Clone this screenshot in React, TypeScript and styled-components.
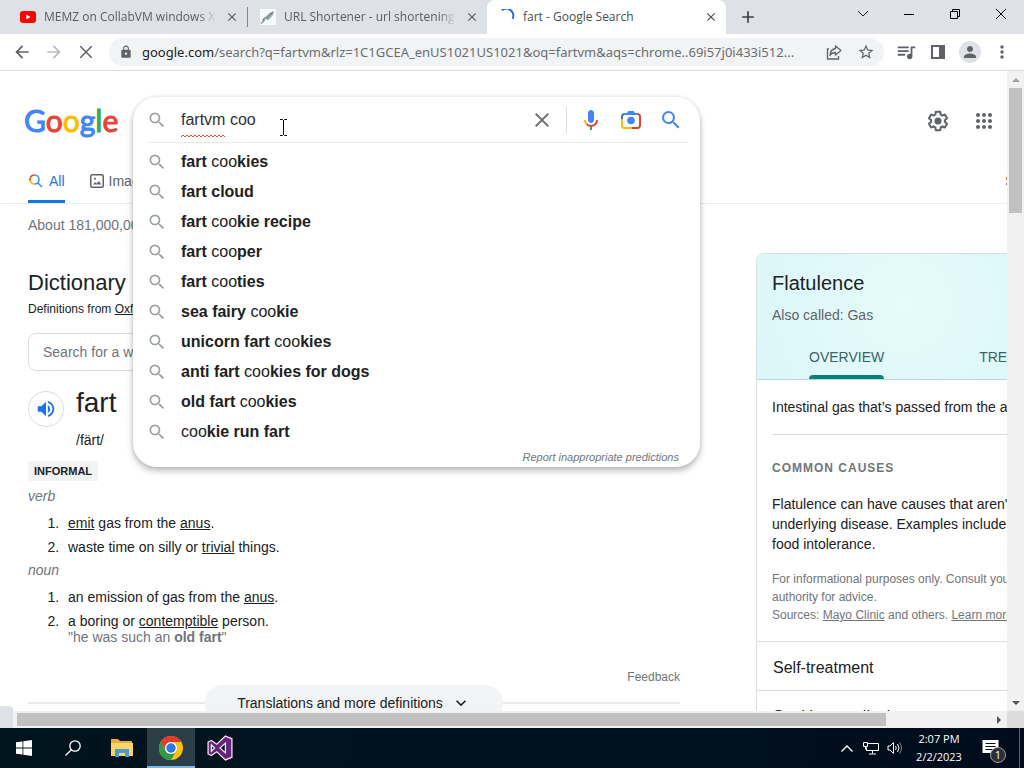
import React from "react";
import styled, { createGlobalStyle, css } from "styled-components";
import {
  MdArrowBack,
  MdArrowForward,
  MdClose,
  MdLock,
  MdStarBorder,
  MdQueueMusic,
  MdMoreVert,
  MdPerson,
  MdVolumeUp,
  MdSearch,
  MdAdd,
  MdExpandMore,
} from "react-icons/md";

const ui = `"Open Sans", "Noto Sans", sans-serif`;
const web = `"Liberation Sans", Arial, sans-serif`;

const GlobalStyle = createGlobalStyle`
  * { box-sizing: border-box; }
  body { margin: 0; background: #fff; font-family: ${web}; font-size: 14px; color: #202124; }
  button { border: 0; padding: 0; margin: 0; background: none; font: inherit; color: inherit; }
  a { color: inherit; }
  svg { display: block; flex: none; }
  h1, h2, h3, p, ol, ul { margin: 0; padding: 0; font-weight: 400; }
`;

const Desktop = styled.div`
  display: flex;
  flex-direction: column;
  height: 100vh;
  overflow: hidden;
`;

/* ---------- Browser tab strip ---------- */

const TabStrip = styled.div`
  display: flex;
  flex: none;
  height: 34px;
  padding-left: 8px;
  background: #dee1e6;
  font-family: ${ui};
  font-size: 12px;
`;

const Tab = styled.div<{ $active?: boolean }>`
  display: flex;
  align-items: center;
  flex: 0 1 239px;
  min-width: 0;
  padding: 0 7px 0 12px;
  gap: 8px;
  color: #5a5e62;
  ${(p) =>
    p.$active &&
    css`
      background: #fff;
      color: #4a4e52;
      border-radius: 8px 8px 0 0;
    `}
`;

const TabTitle = styled.span<{ $fade?: boolean }>`
  flex: 1;
  min-width: 0;
  overflow: hidden;
  white-space: nowrap;
  line-height: 18px;
  ${(p) => p.$fade && css`mask-image: linear-gradient(90deg, #000 90%, transparent);`}
`;

const TabDivider = styled.span`
  width: 1px;
  height: 20px;
  margin-top: 7px;
  background: #80868b;
`;

const IconButton = styled.button<{ $w?: number; $h?: number }>`
  display: flex;
  align-items: center;
  justify-content: center;
  flex: none;
  width: ${(p) => p.$w ?? 16}px;
  height: ${(p) => p.$h ?? 16}px;
`;

const WindowControls = styled.div`
  display: flex;
  margin-left: auto;
  color: #111;
`;

/* ---------- Browser toolbar ---------- */

const Toolbar = styled.div`
  display: flex;
  align-items: center;
  flex: none;
  height: 37px;
  padding: 0 6px;
  border-bottom: 1px solid #dadce0;
  background: #fff;
  color: #5f6368;
`;

const Omnibox = styled.div`
  display: flex;
  align-items: center;
  flex: 1;
  min-width: 0;
  height: 28px;
  margin: 0 6px 0 7px;
  padding: 0 2px 0 10px;
  border-radius: 14px;
  background: #f1f3f4;
`;

const Address = styled.div`
  flex: 1;
  min-width: 0;
  margin-left: 9px;
  overflow: hidden;
  white-space: nowrap;
  font-family: "Noto Sans", sans-serif;
  font-size: 13px;
  line-height: 20px;
  color: #6a6e73;
  b { font-weight: 400; color: #202124; }
`;

const Avatar = styled.span`
  display: flex;
  align-items: center;
  justify-content: center;
  width: 22px;
  height: 22px;
  border-radius: 50%;
  background: #dee1e6;
`;

/* ---------- Viewport with scroll bars ---------- */

const Viewport = styled.div`
  display: grid;
  grid-template-columns: minmax(0, 1fr) 17px;
  grid-template-rows: minmax(0, 1fr) 17px;
  flex: 1;
  min-height: 0;
  position: relative;
`;

const Page = styled.main`
  overflow: hidden;
  background: #fff;
`;

const VerticalBar = styled.div`
  display: flex;
  flex-direction: column;
  align-items: center;
  background: #f1f1f1;
`;

const VerticalThumb = styled.div`
  width: 13px;
  height: 125px;
  margin-bottom: auto;
  background: #c1c1c1;
`;

const HorizontalBar = styled.div`
  display: flex;
  align-items: center;
  background: #f1f1f1;
`;

const HorizontalThumb = styled.div`
  width: calc(100% - 138px);
  height: 13px;
  margin-right: auto;
  background: #c1c1c1;
`;

const Corner = styled.div`
  background: #dcdcdc;
`;

const StatusBubble = styled.div`
  position: absolute;
  left: 0;
  bottom: 0;
  width: 13px;
  height: 22px;
  border-radius: 0 4px 0 0;
  background: #dee1e6;
`;

/* ---------- Search header ---------- */

const Header = styled.header`
  display: flex;
  align-items: center;
  padding: 26px 11px 0 24px;
`;

const Logo = styled.a`
  flex: none;
  width: 92px;
  margin-right: 17px;
  font-family: Lato, sans-serif;
  font-size: 30px;
  line-height: 46px;
  text-decoration: none;
  white-space: nowrap;
`;

const Tint = styled.span<{ $c: string }>`
  color: ${(p) => p.$c};
  -webkit-text-stroke: 1px ${(p) => p.$c};
`;

const SearchForm = styled.form`
  position: relative;
  flex: 0 1 567px;
  height: 46px;
`;

const SearchPanel = styled.div`
  position: absolute;
  z-index: 2;
  top: 0;
  left: 0;
  right: 0;
  border-radius: 24px;
  background: #fff;
  box-shadow: 0 4px 6px rgba(32, 33, 36, 0.28), 0 0 4px rgba(32, 33, 36, 0.12);
`;

const SearchRow = styled.div`
  display: flex;
  align-items: center;
  height: 46px;
  margin: 0 12px 0 14px;
  border-bottom: 1px solid #e8eaed;
  color: #9aa0a6;
`;

const SearchField = styled.input`
  flex: 1;
  min-width: 0;
  height: 34px;
  margin-left: 14px;
  padding: 0;
  border: 0;
  outline: 0;
  background: transparent;
  font: 16px ${web};
  color: #303134;
`;

const Squiggle = styled.svg`
  position: absolute;
  top: 37px;
  left: 48px;
`;

const TextCursor = styled.svg`
  position: absolute;
  top: 22px;
  left: 145px;
`;

const ActionRule = styled.span`
  width: 1px;
  height: 26px;
  margin: 0 12px;
  background: #dadce0;
`;

const Actions = styled.div`
  display: flex;
  gap: 16px;
  margin-right: 5px;
`;

const Suggestions = styled.ul`
  list-style: none;
  padding: 4px 0 0 14px;
`;

const Suggestion = styled.li`
  display: flex;
  align-items: center;
  gap: 14px;
  height: 30px;
  font-size: 16px;
  line-height: 22px;
  color: #9aa0a6;
  span { color: #212121; }
`;

const Report = styled.a`
  display: block;
  padding: 2px 21px 2px 0;
  text-align: right;
  text-decoration: none;
  font-size: 11px;
  font-style: italic;
  line-height: 16px;
  color: #70757a;
`;

const HeaderTools = styled.div`
  display: flex;
  gap: 22px;
  margin-left: auto;
  padding-top: 2px;
  color: #5f6368;
`;

const ModeNav = styled.nav`
  display: flex;
  gap: 25px;
  height: 44px;
  margin-top: 17px;
  padding-left: 28px;
  border-bottom: 1px solid #ebebeb;
`;

const Mode = styled.a<{ $active?: boolean }>`
  display: flex;
  align-items: center;
  gap: 5px;
  height: 43px;
  padding-top: 2px;
  border-bottom: 3px solid ${(p) => (p.$active ? "#1a73e8" : "transparent")};
  color: ${(p) => (p.$active ? "#1a73e8" : "#5f6368")};
  text-decoration: none;
`;

const SafeSearch = styled.a`
  width: 2px;
  margin-left: auto;
  overflow: hidden;
  line-height: 42px;
  color: #5f6368;
  text-decoration: none;
`;

/* ---------- Results ---------- */

const Columns = styled.div`
  display: flex;
  align-items: flex-start;
  padding-left: 28px;
`;

const Results = styled.section`
  flex: none;
  width: 652px;
  margin-right: 76px;
`;

const Stats = styled.p`
  padding-top: 11px;
  line-height: 20px;
  color: #70757a;
`;

const DictTitle = styled.h2`
  margin-top: 35px;
  font-size: 22px;
  line-height: 26px;
`;

const Source = styled.p`
  margin-top: 5px;
  font-size: 12px;
  line-height: 16px;
`;

const WordSearch = styled.input`
  display: block;
  width: 320px;
  height: 38px;
  margin-top: 16px;
  padding: 0 14px;
  border: 1px solid #dadce0;
  border-radius: 8px;
  font: 14px ${web};
  &::placeholder { color: #70757a; }
`;

const WordRow = styled.div`
  display: flex;
  align-items: center;
  gap: 12px;
  height: 36px;
  margin-top: 20px;
`;

const Speaker = styled.button`
  display: flex;
  align-items: center;
  justify-content: center;
  width: 36px;
  height: 36px;
  border: 1px solid #dadce0;
  border-radius: 50%;
  color: #1a73e8;
`;

const Word = styled.h3`
  padding-bottom: 12px;
  font-size: 28px;
  line-height: 36px;
`;

const Phonetic = styled.p`
  margin: 3px 0 0 48px;
  line-height: 20px;
`;

const Badge = styled.span`
  display: block;
  width: max-content;
  margin-top: 11px;
  padding: 0 6px;
  background: #f1f3f4;
  font-size: 11px;
  font-weight: 700;
  line-height: 20px;
`;

const PartOfSpeech = styled.p`
  margin-top: 5px;
  font-style: italic;
  line-height: 20px;
  color: #70757a;
`;

const Senses = styled.ol`
  padding: 9px 0 0 35px;
  line-height: 16px;
  li { padding-left: 5px; }
  li + li { margin-top: 8px; }
`;

const Quote = styled.div`
  color: #70757a;
`;

const Feedback = styled.a`
  display: block;
  margin-top: 24px;
  text-align: right;
  text-decoration: none;
  font-size: 12px;
  line-height: 16px;
  color: #70757a;
`;

const MoreRow = styled.div`
  display: flex;
  align-items: center;
  height: 36px;
  &::before, &::after { content: ""; flex: 1; height: 2px; background: #ebebeb; }
`;

const MoreButton = styled.button`
  display: flex;
  align-items: center;
  justify-content: center;
  gap: 8px;
  width: 298px;
  height: 36px;
  border-radius: 18px;
  background: #f1f3f4;
`;

const Card = styled.aside`
  flex: none;
  width: 369px;
  margin-top: 49px;
  border: 1px solid #dadce0;
  border-radius: 8px;
  overflow: hidden;
`;

const CardHead = styled.div`
  padding: 16px 15px 0;
  border-bottom: 1px solid #b8d9da;
  background: radial-gradient(circle at 40% 40%, #e6fbfa, #dff8fa 45%, #d9f7f9);
`;

const CardTitle = styled.h2`
  font-size: 20px;
  line-height: 26px;
`;

const Also = styled.p`
  margin-top: 9px;
  line-height: 20px;
  color: #5f6368;
`;

const CardTabs = styled.div`
  display: flex;
  gap: 95px;
  margin-top: 18px;
  padding-left: 37px;
`;

const CardTab = styled.div<{ $active?: boolean }>`
  display: flex;
  flex-direction: column;
  &::after {
    content: "";
    height: 4px;
    border-radius: 4px 4px 0 0;
    background: ${(p) => (p.$active ? "#0c8080" : "transparent")};
  }
`;

const CardTabButton = styled.button`
  height: 32px;
  padding-bottom: 4px;
  color: #3c6467;
`;

const Summary = styled.p`
  margin-left: 15px;
  padding: 17px 0;
  border-bottom: 1px solid #dadce0;
  line-height: 20px;
`;

const Causes = styled.div`
  padding: 24px 15px 17px;
  border-bottom: 1px solid #dadce0;
`;

const CausesTitle = styled.h3`
  font-size: 12px;
  font-weight: 700;
  line-height: 18px;
  letter-spacing: 1px;
  color: #70757a;
`;

const CausesText = styled.p`
  margin-top: 17px;
  line-height: 20px;
`;

const Disclaimer = styled.p`
  margin-top: 16px;
  font-size: 12px;
  line-height: 18px;
  color: #70757a;
`;

const Expander = styled.button`
  display: block;
  width: 100%;
  height: 49px;
  padding: 4px 0 0 16px;
  border-bottom: 1px solid #dadce0;
  text-align: left;
  font-size: 16px;
`;

/* ---------- Taskbar ---------- */

const Taskbar = styled.footer`
  display: flex;
  flex: none;
  height: 40px;
  background: linear-gradient(90deg, #00141d, #00121f 50%, #000c1b);
  color: #fff;
`;

const TaskButton = styled.button<{ $active?: boolean }>`
  display: flex;
  align-items: center;
  justify-content: center;
  width: 48px;
  margin-right: 1px;
  ${(p) =>
    p.$active &&
    css`
      background: #2b3d45;
      border-bottom: 2px solid #76b9ed;
      border-top: 2px solid #2b3d45;
    `}
`;

const Tray = styled.div`
  display: flex;
  align-items: center;
  margin-left: auto;
`;

const Clock = styled.button`
  width: 58px;
  margin: 0 14px 0 3px;
  text-align: center;
  font-family: ${ui};
  font-size: 11px;
  line-height: 18px;
  white-space: nowrap;
`;

const Notices = styled.button`
  position: relative;
  width: 24px;
  height: 30px;
  margin-right: 13px;
`;

const NoticeCount = styled.span`
  position: absolute;
  right: 0;
  bottom: 0;
  width: 16px;
  height: 16px;
  border: 1px solid #9aa0a6;
  border-radius: 50%;
  background: #2b2f38;
  font-family: ${ui};
  font-size: 11px;
  line-height: 14px;
  text-align: center;
`;

const ShowDesktop = styled.span`
  width: 5px;
  height: 40px;
  border-left: 1px solid #59616b;
`;

const YouTubeIcon = () => (
  <svg width="16" height="16" viewBox="0 0 16 16">
    <rect y="2" width="16" height="12" rx="3" fill="#f00" />
    <path d="M6.300 5.500v5l4.200-2.500z" fill="#fff" />
  </svg>
);

const LinkFavicon = () => (
  <svg width="16" height="16" viewBox="0 0 16 16">
    <rect width="16" height="16" fill="#f6fbfc" />
    <path d="M1 14.500l4-4M2.500 11.500l2.500-3" stroke="#888" strokeWidth="1.200" />
    <path d="M4.500 8.500L10 3.500l4-1.500-1 4-5 5.500-1.500-1.500-2 .5z" fill="#9fadaf" />
    <path d="M6 10l7-7" stroke="#66757a" />
  </svg>
);

const SpinnerIcon = () => (
  <svg width="16" height="16" viewBox="0 0 16 16">
    <path d="M1.500 2.500A7 7 0 0 1 13.800 8.500" transform="rotate(12 8 8)" fill="none" stroke="#2a6bd6" strokeWidth="2" />
  </svg>
);

const CameraIcon = () => (
  <svg width="24" height="24" viewBox="0 0 24 24" fill="none" strokeWidth="2">
    <path d="M3 12V8.500A2.500 2.500 0 0 1 5.500 6H8" stroke="#3f6fc9" />
    <path d="M16 6h2.500A2.500 2.500 0 0 1 21 8.500V17.500A2.500 2.500 0 0 1 18.500 20H13" stroke="#dc4437" />
    <path d="M3 11v6.500A2.500 2.500 0 0 0 5.500 20H13" stroke="#fbbc04" />
    <path d="M5 5h3l1.500-2h5L16 5h3v2H5z" fill="#4285f4" />
    <circle cx="12" cy="12.500" r="3.800" fill="#4285f4" />
  </svg>
);

const MicIcon = () => (
  <svg width="24" height="24" viewBox="0 0 24 24">
    <path fill="#4285f4" d="m12 15c1.660 0 3-1.310 3-2.970v-7.020c0-1.660-1.340-3.010-3-3.010s-3 1.340-3 3.010v7.020c0 1.660 1.340 2.970 3 2.970z" />
    <path fill="#34a853" d="m11 18.080h2v3.920h-2z" />
    <path fill="#fbbc05" d="m7.050 16.870c-1.270-1.330-2.050-2.830-2.050-4.870h2c0 1.450 0.560 2.420 1.470 3.380v0.320l-1.150 1.180z" />
    <path fill="#ea4335" d="m12 16.930a4.970 5.250 0 0 1 -3.540 -1.550l-1.410 1.490c1.260 1.340 3.020 2.130 4.950 2.130 3.870 0 6.990-2.920 6.990-7h-1.990c0 2.920-2.240 4.930-5 4.930z" />
  </svg>
);

const GearIcon = () => (
  <svg width="24" height="24" viewBox="0 0 24 24" fill="#5f6368">
    <path d="M13.850 22.250h-3.700c-.74 0-1.360-.54-1.450-1.270l-.27-1.890c-.27-.14-.53-.29-.79-.46l-1.800.72c-.7.260-1.470-.03-1.810-.65L2.200 15.530c-.35-.66-.2-1.440.360-1.880l1.530-1.190c-.01-.15-.02-.3-.02-.46 0-.15.010-.31.020-.46l-1.520-1.190c-.59-.45-.74-1.260-.37-1.880l1.850-3.190c.340-.62 1.110-.9 1.790-.63l1.810.730c.260-.17.520-.32.780-.46l.270-1.910c.090-.7.710-1.250 1.440-1.250h3.700c.740 0 1.360.540 1.450 1.270l.270 1.890c.270.140.530.290.790.460l1.800-.72c.710-.26 1.480.030 1.820.650l1.840 3.180c.360.660.200 1.440-.36 1.880l-1.520 1.190c.010.150.020.300.020.460s-.01.310-.02.460l1.520 1.190c.560.450.720 1.230.370 1.860l-1.860 3.220c-.34.620-1.110.900-1.800.630l-1.800-.72c-.26.170-.52.320-.78.460l-.27 1.910c-.1.680-.72 1.220-1.460 1.220zm-3.230-2h2.760l.370-2.550.530-.22c.440-.18.880-.44 1.340-.78l.450-.34 2.380.960 1.380-2.400-2.030-1.580.070-.56c.030-.26.060-.51.060-.78s-.03-.53-.06-.78l-.07-.56 2.030-1.580-1.390-2.400-2.390.960-.45-.35c-.42-.32-.87-.58-1.330-.77l-.52-.22-.37-2.550h-2.760l-.37 2.550-.53.210c-.44.190-.88.440-1.340.790l-.45.330-2.380-.95-1.390 2.390 2.030 1.580-.07.560a7 7 0 0 0-.06.790c0 .260.020.530.060.780l.070.560-2.030 1.580 1.380 2.400 2.390-.96.450.350c.430.330.860.580 1.330.770l.530.220z" />
    <circle cx="12" cy="12" r="3.500" />
  </svg>
);

const AppsIcon = () => (
  <svg width="24" height="24" viewBox="0 0 24 24" fill="#5f6368">
    {[6, 12, 18].map((y) => [6, 12, 18].map((x) => <circle key={`${x}-${y}`} cx={x} cy={y} r="2" />))}
  </svg>
);

const ColorSearchIcon = () => (
  <svg width="16" height="16" viewBox="0 0 16 16" fill="none" strokeWidth="1.500">
    <path d="M2.200 8.200A4.500 4.500 0 0 1 6.500 2" stroke="#ea4335" />
    <path d="M6.500 11A4.500 4.500 0 0 1 2.100 7.500" stroke="#fbbc04" />
    <path d="M6.500 2a4.500 4.500 0 0 1 0 9" stroke="#4285f4" />
    <path d="M9.700 9.700l4.300 4.300" stroke="#4285f4" />
  </svg>
);

const PictureIcon = () => (
  <svg width="14" height="14" viewBox="0 0 14 14" fill="none" stroke="#5f6368">
    <rect x=".75" y=".75" width="12.500" height="12.500" rx="1.500" strokeWidth="1.500" />
    <path d="M3 10.500l2-2.500 1.500 1.500L9 7l2.200 3.500z" fill="#5f6368" stroke="none" />
    <circle cx="5" cy="4.800" r="1" fill="#5f6368" stroke="none" />
  </svg>
);

const ShareIcon = () => (
  <svg width="18" height="18" viewBox="0 0 18 18" fill="none" stroke="#5f6368" strokeWidth="1.300">
    <path d="M4 6H2.500v10h11v-3" />
    <path d="M10.500 3l5.500 4.500-5.500 4.500V9.500c-3 0-4.500 1-5.500 3 .2-4 2-6.500 5.500-7z" strokeLinejoin="round" />
  </svg>
);

const FolderIcon = () => (
  <svg width="22" height="20" viewBox="0 0 22 20">
    <path d="M0 1h7l2 2h12v4H0z" fill="#e8ae3a" />
    <path d="M0 5h22v13H0z" fill="#fbd568" />
    <path d="M4 11h14v8h-4v-4H8v4H4z" fill="#4b9ad5" />
  </svg>
);

const ChromeIcon = () => (
  <svg width="24" height="24" viewBox="0 0 24 24">
    <circle cx="12" cy="12" r="12" fill="#fbc116" />
    <path d="M1.600 6A12 12 0 0 1 22.400 6H12A6 6 0 0 0 6.800 15z" fill="#e33b2e" />
    <path d="M1.600 6A12 12 0 0 0 12 24L17.200 15A6 6 0 0 1 6.800 15z" fill="#2a9d4a" />
    <circle cx="12" cy="12" r="6" fill="#fff" />
    <circle cx="12" cy="12" r="4.700" fill="#2d76e8" />
  </svg>
);

const StudioIcon = () => (
  <svg width="26" height="26" viewBox="0 0 24 24">
    <path
      d="M17 1l6 2.500v17L17 23l-8-7.500L4 19l-3-1.500v-11L4 5l5 3.500zM4 9v6l3-3zm13-1.500L12 12l5 4.500z"
      fill="#68217a"
      fillRule="evenodd"
      stroke="#eee3f2"
      strokeWidth="1.200"
    />
  </svg>
);

const suggestions: React.ReactNode[] = [
  <><b>fart</b> coo<b>kies</b></>,
  <><b>fart cloud</b></>,
  <><b>fart</b> coo<b>kie recipe</b></>,
  <><b>fart</b> coo<b>per</b></>,
  <><b>fart</b> coo<b>ties</b></>,
  <><b>sea fairy</b> coo<b>kie</b></>,
  <><b>unicorn fart</b> coo<b>kies</b></>,
  <><b>anti fart</b> coo<b>kies for dogs</b></>,
  <><b>old fart</b> coo<b>kies</b></>,
  <>coo<b>kie run fart</b></>,
];

const logoLetters: [string, string][] = [
  ["G", "#4285f4"],
  ["o", "#ea4335"],
  ["o", "#fbbc05"],
  ["g", "#4285f4"],
  ["l", "#34a853"],
  ["e", "#ea4335"],
];

function BrowserTop() {
  return (
    <>
      <TabStrip>
        <Tab>
          <YouTubeIcon />
          <TabTitle $fade>MEMZ on CollabVM windows XP</TabTitle>
          <IconButton aria-label="Close tab"><MdClose size={14} /></IconButton>
        </Tab>
        <TabDivider />
        <Tab>
          <LinkFavicon />
          <TabTitle $fade>URL Shortener - url shortening service</TabTitle>
          <IconButton aria-label="Close tab"><MdClose size={14} /></IconButton>
        </Tab>
        <Tab $active>
          <SpinnerIcon />
          <TabTitle>fart - Google Search</TabTitle>
          <IconButton aria-label="Close tab"><MdClose size={14} /></IconButton>
        </Tab>
        <IconButton $w={44} $h={34} aria-label="New tab"><MdAdd size={20} color="#3c4043" /></IconButton>
        <WindowControls>
          <IconButton $w={46} $h={28} aria-label="Search tabs">
            <svg width="12" height="8" viewBox="0 0 12 8" fill="none" stroke="#222"><path d="M1 1l5 5 5-5" /></svg>
          </IconButton>
          <IconButton $w={46} $h={28} aria-label="Minimize">
            <svg width="10" height="10" viewBox="0 0 10 10" stroke="#000"><path d="M0 5.500h10" /></svg>
          </IconButton>
          <IconButton $w={46} $h={28} aria-label="Restore">
            <svg width="10" height="10" viewBox="0 0 10 10" fill="none" stroke="#000"><path d="M.5 2.500h7v7h-7zM2.500 2.500v-2h7v7h-2" /></svg>
          </IconButton>
          <IconButton $w={46} $h={28} aria-label="Close window">
            <svg width="10" height="10" viewBox="0 0 10 10" stroke="#000"><path d="M0 0l10 10M10 0L0 10" /></svg>
          </IconButton>
        </WindowControls>
      </TabStrip>
      <Toolbar>
        <IconButton $w={32} $h={28} aria-label="Back"><MdArrowBack size={20} /></IconButton>
        <IconButton $w={32} $h={28} aria-label="Forward"><MdArrowForward size={20} color="#babcbe" /></IconButton>
        <IconButton $w={32} $h={28} aria-label="Stop">
          <svg width="12" height="12" viewBox="0 0 12 12" stroke="#5f6368" strokeWidth="1.500"><path d="M0 0l12 12M12 0L0 12" /></svg>
        </IconButton>
        <Omnibox>
          <MdLock size={14} />
          <Address>
            <b>google.com</b>/search?q=fartvm&amp;rlz=1C1GCEA_enUS1021US1021&amp;oq=fartvm&amp;aqs=chrome..69i57j0i433i512...
          </Address>
          <IconButton $w={32} $h={28} aria-label="Share"><ShareIcon /></IconButton>
          <IconButton $w={32} $h={28} aria-label="Bookmark"><MdStarBorder size={18} /></IconButton>
        </Omnibox>
        <IconButton $w={32} $h={28} aria-label="Media"><MdQueueMusic size={22} /></IconButton>
        <IconButton $w={32} $h={28} aria-label="Side panel">
          <svg width="14" height="14" viewBox="0 0 14 14"><path d="M0 0h14v14H0zM2 2v10h6V2z" fill="#5f6368" fillRule="evenodd" /></svg>
        </IconButton>
        <IconButton $w={32} $h={28} aria-label="Profile"><Avatar><MdPerson size={18} /></Avatar></IconButton>
        <IconButton $w={32} $h={28} aria-label="Menu"><MdMoreVert size={20} /></IconButton>
      </Toolbar>
    </>
  );
}

function SearchHeader() {
  return (
    <>
      <Header>
        <Logo href="#" aria-label="Google">
          {logoLetters.map(([ch, c], i) => <Tint key={i} $c={c}>{ch}</Tint>)}
        </Logo>
        <SearchForm>
          <SearchPanel>
            <SearchRow>
              <MdSearch size={20} />
              <SearchField aria-label="Search" defaultValue="fartvm coo" spellCheck={false} />
              <IconButton $w={24} $h={24} type="button" aria-label="Clear"><MdClose size={24} color="#70757a" /></IconButton>
              <ActionRule />
              <Actions>
                <IconButton $w={24} $h={24} type="button" aria-label="Search by voice"><MicIcon /></IconButton>
                <IconButton $w={24} $h={24} type="button" aria-label="Search by image"><CameraIcon /></IconButton>
                <IconButton $w={24} $h={24} type="submit" aria-label="Search"><MdSearch size={24} color="#4285f4" /></IconButton>
              </Actions>
            </SearchRow>
            <Squiggle width="44" height="4" viewBox="0 0 44 4" fill="none" stroke="#d9502e">
              <path d="M0 3l2-2 2 2 2-2 2 2 2-2 2 2 2-2 2 2 2-2 2 2 2-2 2 2 2-2 2 2 2-2 2 2 2-2 2 2 2-2 2 2 2-2 2 2" />
            </Squiggle>
            <TextCursor width="11" height="17" viewBox="0 0 11 17" stroke="#000" fill="none">
              <path d="M2 .5h2.500l1 1 1-1H9M5.500 1v15M2 16.500h2.500l1-1 1 1H9" />
            </TextCursor>
            <Suggestions>
              {suggestions.map((s, i) => (
                <Suggestion key={i}><MdSearch size={20} /><span>{s}</span></Suggestion>
              ))}
            </Suggestions>
            <Report href="#">Report inappropriate predictions</Report>
          </SearchPanel>
        </SearchForm>
        <HeaderTools>
          <IconButton $w={24} $h={24} aria-label="Settings"><GearIcon /></IconButton>
          <IconButton $w={24} $h={24} aria-label="Google apps"><AppsIcon /></IconButton>
        </HeaderTools>
      </Header>
      <ModeNav>
        <Mode href="#" $active><ColorSearchIcon />All</Mode>
        <Mode href="#"><PictureIcon />Images</Mode>
        <SafeSearch href="#">SafeSearch</SafeSearch>
      </ModeNav>
    </>
  );
}

function Dictionary() {
  return (
    <Results>
      <Stats>About 181,000,000 results</Stats>
      <DictTitle>Dictionary</DictTitle>
      <Source>Definitions from <a href="#">Oxford Languages</a></Source>
      <WordSearch aria-label="Search for a word" placeholder="Search for a word" />
      <WordRow>
        <Speaker aria-label="Pronounce"><MdVolumeUp size={22} /></Speaker>
        <Word>fart</Word>
      </WordRow>
      <Phonetic>/färt/</Phonetic>
      <Badge>INFORMAL</Badge>
      <PartOfSpeech>verb</PartOfSpeech>
      <Senses>
        <li><a href="#">emit</a> gas from the <a href="#">anus</a>.</li>
        <li>waste time on silly or <a href="#">trivial</a> things.</li>
      </Senses>
      <PartOfSpeech>noun</PartOfSpeech>
      <Senses>
        <li>an emission of gas from the <a href="#">anus</a>.</li>
        <li>
          a boring or <a href="#">contemptible</a> person.
          <Quote>"he was such an <b>old fart</b>"</Quote>
        </li>
      </Senses>
      <Feedback href="#">Feedback</Feedback>
      <MoreRow>
        <MoreButton>Translations and more definitions<MdExpandMore size={20} /></MoreButton>
      </MoreRow>
    </Results>
  );
}

function HealthCard() {
  return (
    <Card>
      <CardHead>
        <CardTitle>Flatulence</CardTitle>
        <Also>Also called: Gas</Also>
        <CardTabs>
          <CardTab $active><CardTabButton>OVERVIEW</CardTabButton></CardTab>
          <CardTab><CardTabButton>TREATMENTS</CardTabButton></CardTab>
        </CardTabs>
      </CardHead>
      <Summary>Intestinal gas that’s passed from the anus.</Summary>
      <Causes>
        <CausesTitle>COMMON CAUSES</CausesTitle>
        <CausesText>
          Flatulence can have causes that aren't due to<br />underlying disease. Examples include diet or<br />food intolerance.
        </CausesText>
        <Disclaimer>
          For informational purposes only. Consult your local medical<br />authority for advice.<br />
          Sources: <a href="#">Mayo Clinic</a> and others. <a href="#">Learn more</a>
        </Disclaimer>
      </Causes>
      <Expander>Self-treatment</Expander>
      <Expander>Seeking medical care</Expander>
    </Card>
  );
}

function WindowsTaskbar() {
  return (
    <Taskbar>
      <TaskButton aria-label="Start">
        <svg width="16" height="16" viewBox="0 0 16 16" fill="#fff"><path d="M0 2.300l6.500-.9v6.200H0zM7.300 1.300L16 0v7.600H7.300zM0 8.400h6.500v6.200L0 13.700zM7.300 8.400H16V16l-8.700-1.300z" /></svg>
      </TaskButton>
      <TaskButton aria-label="Search">
        <svg width="16" height="16" viewBox="0 0 16 16" fill="none" stroke="#fff" strokeWidth="1.300"><circle cx="10" cy="6" r="5.200" /><path d="M6.300 9.700L.5 15.500" /></svg>
      </TaskButton>
      <TaskButton aria-label="File Explorer"><FolderIcon /></TaskButton>
      <TaskButton $active aria-label="Chrome"><ChromeIcon /></TaskButton>
      <TaskButton aria-label="Visual Studio"><StudioIcon /></TaskButton>
      <Tray>
        <IconButton $w={24} $h={40} aria-label="Hidden icons">
          <svg width="12" height="7" viewBox="0 0 12 7" fill="none" stroke="#fff" strokeWidth="1.300"><path d="M.5 6.500L6 1l5.500 5.500" /></svg>
        </IconButton>
        <IconButton $w={24} $h={40} aria-label="Network">
          <svg width="16" height="14" viewBox="0 0 16 14" fill="none" stroke="#fff"><path d="M5 2.500h10.500v7H3.500v-3M.5 1.500h4v4h-4zM2.500 5.500v3M9.500 9.500v3M6 13h7" /></svg>
        </IconButton>
        <IconButton $w={24} $h={40} aria-label="Volume">
          <svg width="16" height="14" viewBox="0 0 16 14" fill="none" stroke="#fff"><path d="M1 5h2l3.500-3.500v11L3 9H1zM8.500 5q1.500 2 0 4M10.500 3q3 4 0 8" /><path d="M12.500 1.500q4 5.500 0 11" opacity=".5" /></svg>
        </IconButton>
        <Clock>2:07 PM<br />2/2/2023</Clock>
        <Notices aria-label="Notifications">
          <svg width="17" height="17" viewBox="0 0 16 17"><path d="M0 0h16v13h-4v4l-4-4H0z" fill="#fff" /><path d="M3 3.500h10M3 6.500h10M3 9.500h7" stroke="#00101c" /></svg>
          <NoticeCount>1</NoticeCount>
        </Notices>
        <ShowDesktop />
      </Tray>
    </Taskbar>
  );
}

export default function App() {
  return (
    <Desktop>
      <GlobalStyle />
      <BrowserTop />
      <Viewport>
        <Page>
          <SearchHeader />
          <Columns>
            <Dictionary />
            <HealthCard />
          </Columns>
        </Page>
        <VerticalBar>
          <IconButton $w={17} $h={17} aria-label="Scroll up">
            <svg width="8" height="4" viewBox="0 0 8 4"><path d="M4 0l4 4H0z" fill="#a3a3a3" /></svg>
          </IconButton>
          <VerticalThumb />
          <IconButton $w={17} $h={17} aria-label="Scroll down">
            <svg width="8" height="4" viewBox="0 0 8 4"><path d="M4 4l4-4H0z" fill="#505050" /></svg>
          </IconButton>
        </VerticalBar>
        <HorizontalBar>
          <IconButton $w={17} $h={17} aria-label="Scroll left" />
          <HorizontalThumb />
          <IconButton $w={17} $h={17} aria-label="Scroll right">
            <svg width="4" height="8" viewBox="0 0 4 8"><path d="M4 4L0 8V0z" fill="#505050" /></svg>
          </IconButton>
        </HorizontalBar>
        <Corner />
        <StatusBubble />
      </Viewport>
      <WindowsTaskbar />
    </Desktop>
  );
}
